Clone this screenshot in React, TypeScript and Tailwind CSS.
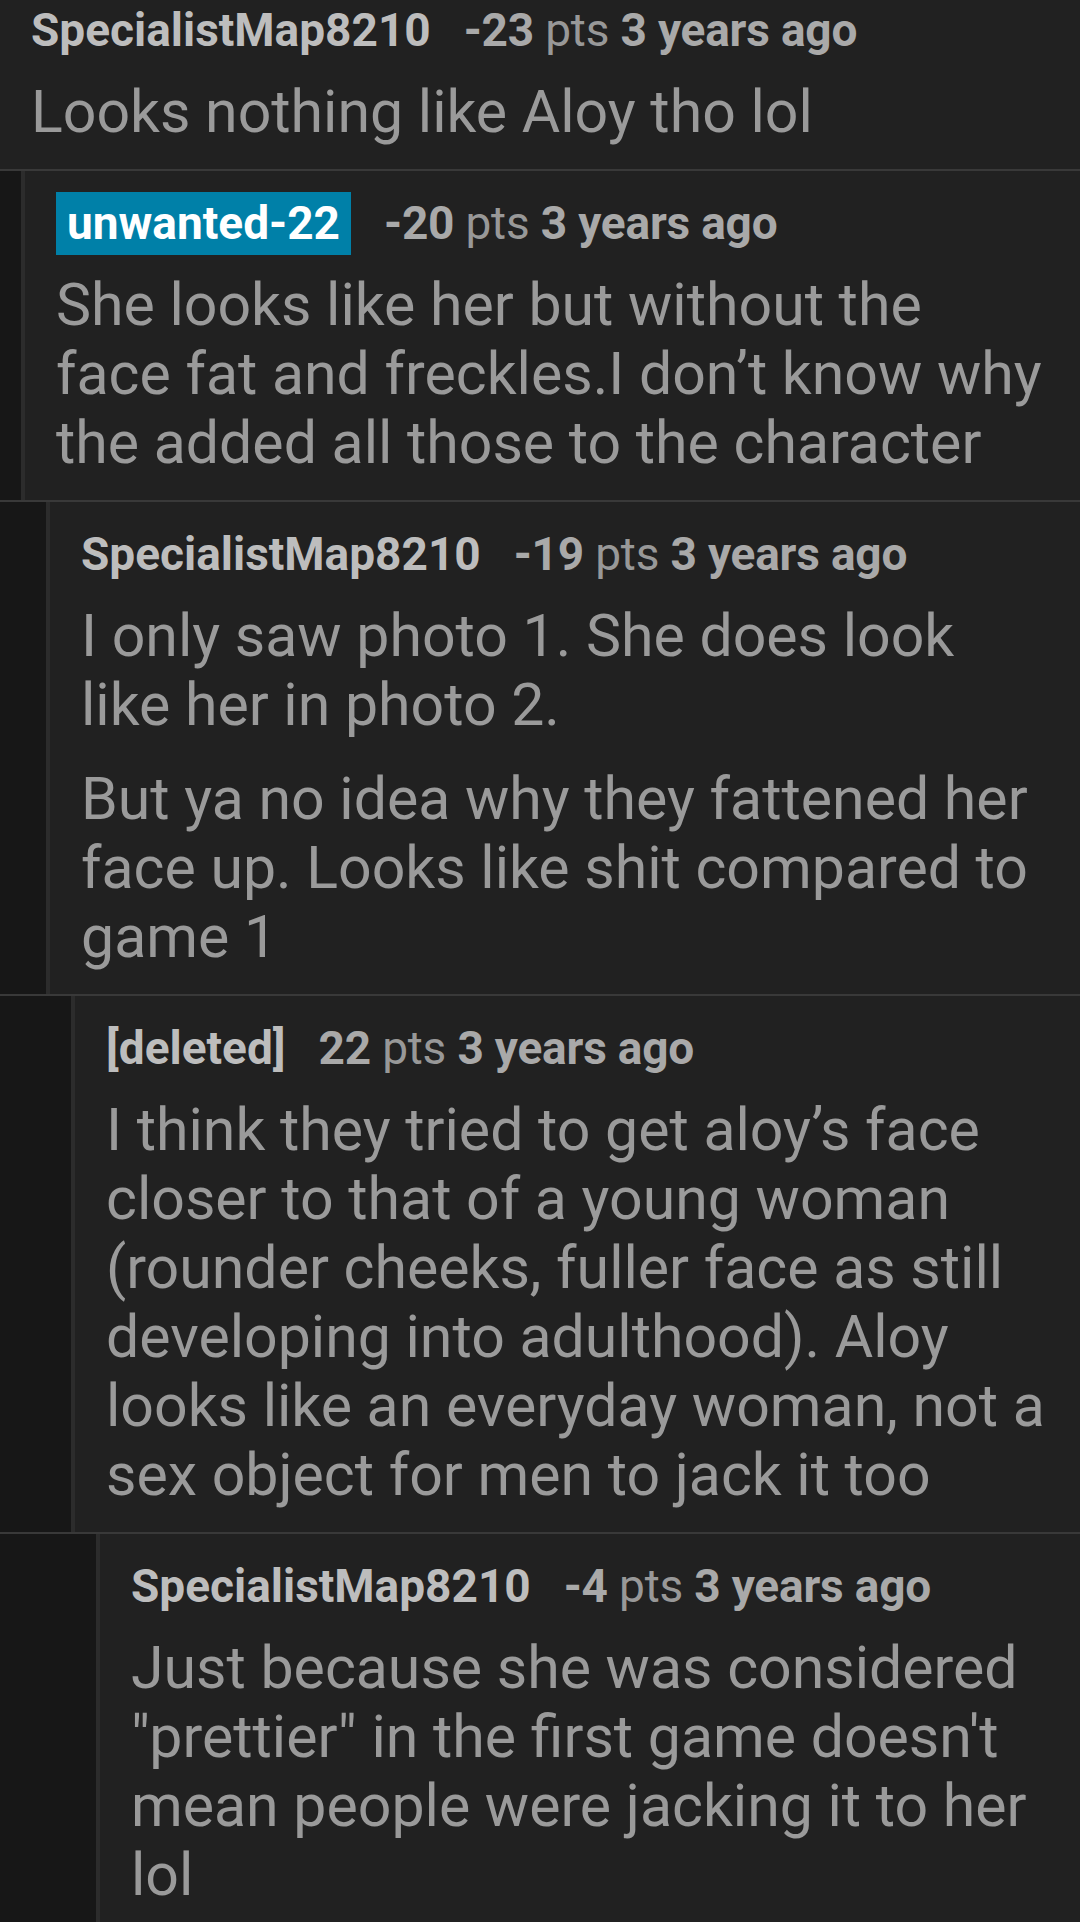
type Comment = {
  author: string;
  highlight?: boolean;
  score: string;
  age: string;
  depth: number;
  paragraphs: string[];
};

const comments: Comment[] = [
  {
    author: 'SpecialistMap8210',
    score: '-23',
    age: '3 years ago',
    depth: 0,
    paragraphs: ['Looks nothing like Aloy tho lol'],
  },
  {
    author: 'unwanted-22',
    highlight: true,
    score: '-20',
    age: '3 years ago',
    depth: 1,
    paragraphs: [
      'She looks like her but without the face fat and freckles.I don’t know why the added all those to the character',
    ],
  },
  {
    author: 'SpecialistMap8210',
    score: '-19',
    age: '3 years ago',
    depth: 2,
    paragraphs: [
      'I only saw photo 1. She does look like her in photo 2.',
      'But ya no idea why they fattened her face up. Looks like shit compared to game 1',
    ],
  },
  {
    author: '[deleted]',
    score: '22',
    age: '3 years ago',
    depth: 3,
    paragraphs: [
      'I think they tried to get aloy’s face closer to that of a young woman (rounder cheeks, fuller face as still developing into adulthood). Aloy looks like an everyday woman, not a sex object for men to jack it too',
    ],
  },
  {
    author: 'SpecialistMap8210',
    score: '-4',
    age: '3 years ago',
    depth: 4,
    paragraphs: [
      'Just because she was considered "prettier" in the first game doesn\'t mean people were jacking it to her lol',
    ],
  },
];

// gutter widths per nesting level (dark strip left of the thread line)
const gutters = [0, 21, 46, 71, 96];

function CommentRow({ c }: { c: Comment }) {
  return (
    <div className="flex border-t-2 border-[#393939]">
      {c.depth > 0 && (
        <>
          <div className="shrink-0 bg-[#171717]" style={{ width: gutters[c.depth] }} />
          <div className="w-[4px] shrink-0 bg-[#2c2c2c]" />
        </>
      )}
      <div className="flex-1 min-w-0 bg-[#212121] pl-[31px] pr-[32px] pt-[25px] pb-[23px]">
        {/* Header */}
        <div className="flex items-center h-[54px] text-[46px] leading-[54px] whitespace-nowrap">
          {c.highlight ? (
            <span className="flex items-center h-[63px] px-[11px] bg-[#0080a8] text-white font-bold">
              {c.author}
            </span>
          ) : (
            <span className="text-[#bdbdbd] font-bold">{c.author}</span>
          )}
          <span className="ml-[33px] text-[#a9a9a9] tracking-[-0.2px]">
            <span className="font-bold">{c.score}</span>{' '}
            <span className="text-[#989898]">pts</span>{' '}
            <span className="font-bold">{c.age}</span>
          </span>
        </div>

        {/* Body */}
        <div className="mt-[20px] flex flex-col gap-[25px] text-[59px] leading-[69px] text-[#9a9a9a]">
          {c.paragraphs.map((p, i) => (
            <p key={i}>{p}</p>
          ))}
        </div>
      </div>
    </div>
  );
}

export default function App() {
  return (
    <div className="min-h-screen bg-[#212121] overflow-hidden font-['Roboto','Liberation_Sans',sans-serif]">
      <div className="-mt-[24px]">
        {comments.map((c, i) => (
          <CommentRow key={i} c={c} />
        ))}
      </div>
    </div>
  );
}
